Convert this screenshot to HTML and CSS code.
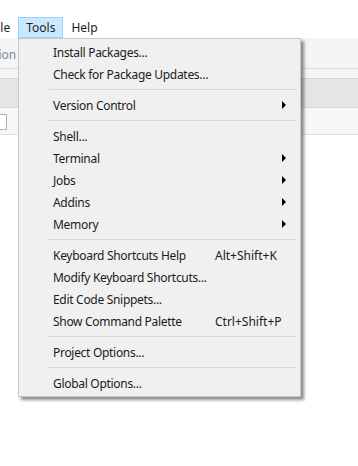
FILE: index.html
```html
<!DOCTYPE html>
<html>
<head>
    <title>Tools menu</title>
    <link rel="stylesheet" href="styles.css">
</head>
<body>
    <div class="window">
        <!-- main menu bar, window is cropped on the left -->
        <div class="menubar">
            <span class="menu-title">File</span>
            <span class="menu-title active">Tools</span>
            <span class="menu-title">Help</span>
        </div>

        <div class="toolbar">
            <span class="goto">Go to file/function</span>
        </div>
        <div class="pane-top"></div>
        <div class="tabbar"></div>
        <div class="source-toolbar">
            <span class="doc-icon"></span>
        </div>
        <div class="editor"></div>

        <!-- Tools dropdown -->
        <div class="dropdown">
            <div class="item"><span class="label">Install Packages...</span></div>
            <div class="item"><span class="label">Check for Package Updates...</span></div>
            <div class="sep"></div>
            <div class="item"><span class="label">Version Control</span><span></span><i class="arrow"></i></div>
            <div class="sep"></div>
            <div class="item"><span class="label">Shell...</span></div>
            <div class="item"><span class="label">Terminal</span><span></span><i class="arrow"></i></div>
            <div class="item"><span class="label">Jobs</span><span></span><i class="arrow"></i></div>
            <div class="item"><span class="label">Addins</span><span></span><i class="arrow"></i></div>
            <div class="item"><span class="label">Memory</span><span></span><i class="arrow"></i></div>
            <div class="sep"></div>
            <div class="item"><span class="label">Keyboard Shortcuts Help</span><span class="shortcut">Alt+Shift+K</span></div>
            <div class="item"><span class="label">Modify Keyboard Shortcuts...</span></div>
            <div class="item"><span class="label">Edit Code Snippets...</span></div>
            <div class="item"><span class="label">Show Command Palette</span><span class="shortcut">Ctrl+Shift+P</span></div>
            <div class="sep"></div>
            <div class="item"><span class="label">Project Options...</span></div>
            <div class="sep"></div>
            <div class="item"><span class="label">Global Options...</span></div>
        </div>
    </div>
</body>
</html>
```

FILE: styles.css
```css
body {
    margin: 0;
    padding: 0;
    font-family: "Noto Sans", "Segoe UI", sans-serif;
    font-size: 12px;
    color: #1b1b1b;
    background: #fff;
}

.window {
    position: relative;
    width: 358px;
    height: 466px;
    overflow: hidden;
}

.menubar {
    display: flex;
    align-items: center;
    height: 21px;
    padding-top: 17px;
    margin-left: -17px;
    background: #fff;
}

.menu-title {
    padding: 0 7px;
    height: 19px;
    line-height: 20px;
    border: 1px solid transparent;
}

.menu-title.active {
    background-color: #cce8ff;
    border-color: #99d1ff;
}

.toolbar {
    height: 30px;
    background: #f3f5f7;
    border-bottom: 1px solid #d9dcdf;
    display: flex;
    align-items: center;
}

.goto {
    color: #8c8c8c;
    margin-left: -86px;
    padding-top: 3px;
    white-space: nowrap;
}

.pane-top {
    height: 9px;
    background: #f3f5f7;
    border-bottom: 1px solid #d5d8db;
}

.tabbar {
    height: 28px;
    background: #e4e5e6;
    border-bottom: 1px solid #d5d8db;
}

.source-toolbar {
    height: 26px;
    background: #f5f7f8;
    border-bottom: 1px solid #dcdfe2;
    display: flex;
    align-items: center;
}

.doc-icon {
    width: 10px;
    height: 14px;
    margin-left: -5px;
    margin-top: 2px;
    border: 1px solid #b4b4b4;
    background: #fff;
}

.editor {
    height: 300px;
    background: #fff;
}

.dropdown {
    position: absolute;
    left: 18px;
    top: 38px;
    width: 281px;
    padding: 2px 0;
    background: #f0f0f0;
    border: 1px solid #c8c8c8;
    box-shadow: 3px 3px 3px rgba(0, 0, 0, 0.45);
}

.item {
    display: grid;
    grid-template-columns: 162px 1fr 4px;
    align-items: center;
    height: 22px;
    padding: 0 14px 0 34px;
}

.label {
    white-space: nowrap;
    letter-spacing: -0.3px;
}

.shortcut {
    white-space: nowrap;
}

.arrow {
    width: 0;
    height: 0;
    border-left: 4px solid #000;
    border-top: 4px solid transparent;
    border-bottom: 4px solid transparent;
}

.sep {
    height: 1px;
    margin: 4px 3px 4px 30px;
    background: #d7d7d7;
}
```
